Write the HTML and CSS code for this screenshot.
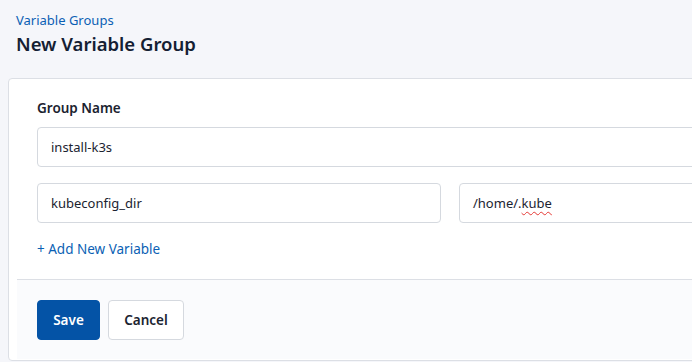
FILE: index.html
```html
<!DOCTYPE html>
<html>
<head>
<meta charset="utf-8">
<link rel="stylesheet" href="styles.css">
</head>
<body>
  <header class="page-header">
    <a class="breadcrumb" href="#">Variable Groups</a>
    <h1 class="title">New Variable Group</h1>
  </header>
  <section class="card">
    <div class="card-body">
      <label class="label">Group Name</label>
      <div class="field">install-k3s</div>
      <div class="var-row">
        <div class="field">kubeconfig_dir</div>
        <div class="field">/home/.<span class="misspelled">kube</span></div>
      </div>
      <a class="add-link" href="#">+ Add New Variable</a>
    </div>
    <div class="card-footer">
      <button class="btn btn-primary">Save</button>
      <button class="btn btn-default">Cancel</button>
    </div>
  </section>
</body>
</html>
```
FILE: styles.css
```css
html, body {
  margin: 0;
  overflow: hidden;
}
body {
  background: #f5f6fa;
  font-family: "Noto Sans", "Open Sans", sans-serif;
  color: #1b2330;
  padding: 11px 8px 0;
  width: 900px;
}
.page-header {
  padding: 0 8px;
  display: flex;
  flex-direction: column;
  gap: 3px;
}
.breadcrumb {
  font-size: 13px;
  line-height: 18px;
  color: #0b5fb4;
  text-decoration: none;
}
.title {
  margin: 0;
  font-size: 18.5px;
  line-height: 24px;
  font-weight: 600;
  color: #142033;
}
.card {
  margin-top: 22px;
  width: 884px;
  box-sizing: border-box;
  background: #fff;
  border: 1px solid #dcdfe5;
  border-radius: 4px;
  padding: 0 0 1px 8px;
}
.card-body {
  padding: 19px 20px 20px;
  display: flex;
  flex-direction: column;
}
.label {
  font-size: 13.5px;
  line-height: 20px;
  font-weight: 600;
  color: #1b2330;
  margin-bottom: 9px;
}
.field {
  height: 40px;
  box-sizing: border-box;
  border: 1px solid #d5d9df;
  border-radius: 4px;
  padding: 0 13px;
  font-size: 13px;
  line-height: 38px;
  color: #1b2330;
  background: #fff;
}
.var-row {
  margin-top: 16px;
  display: grid;
  grid-template-columns: 404px 404px;
  gap: 18px;
}
.misspelled {
  text-decoration: underline wavy #e53935;
  text-decoration-thickness: 1px;
  text-underline-offset: 3px;
}
.add-link {
  margin-top: 16px;
  font-size: 13.5px;
  line-height: 20px;
  color: #0b5fb4;
  text-decoration: none;
}
.card-footer {
  border-top: 1px solid #dcdfe5;
  background: #fafbfd;
  padding: 20px 20px 19px;
  display: flex;
  gap: 8px;
}
.btn {
  height: 40px;
  box-sizing: border-box;
  border-radius: 4px;
  font-family: inherit;
  font-size: 13.5px;
  font-weight: 600;
  padding: 0;
  cursor: pointer;
}
.btn-primary {
  background: #0453a6;
  border: 1px solid #0453a6;
  color: #fff;
  width: 63px;
}
.btn-default {
  background: #fff;
  border: 1px solid #d5d9df;
  color: #1b2330;
  width: 76px;
}
```
